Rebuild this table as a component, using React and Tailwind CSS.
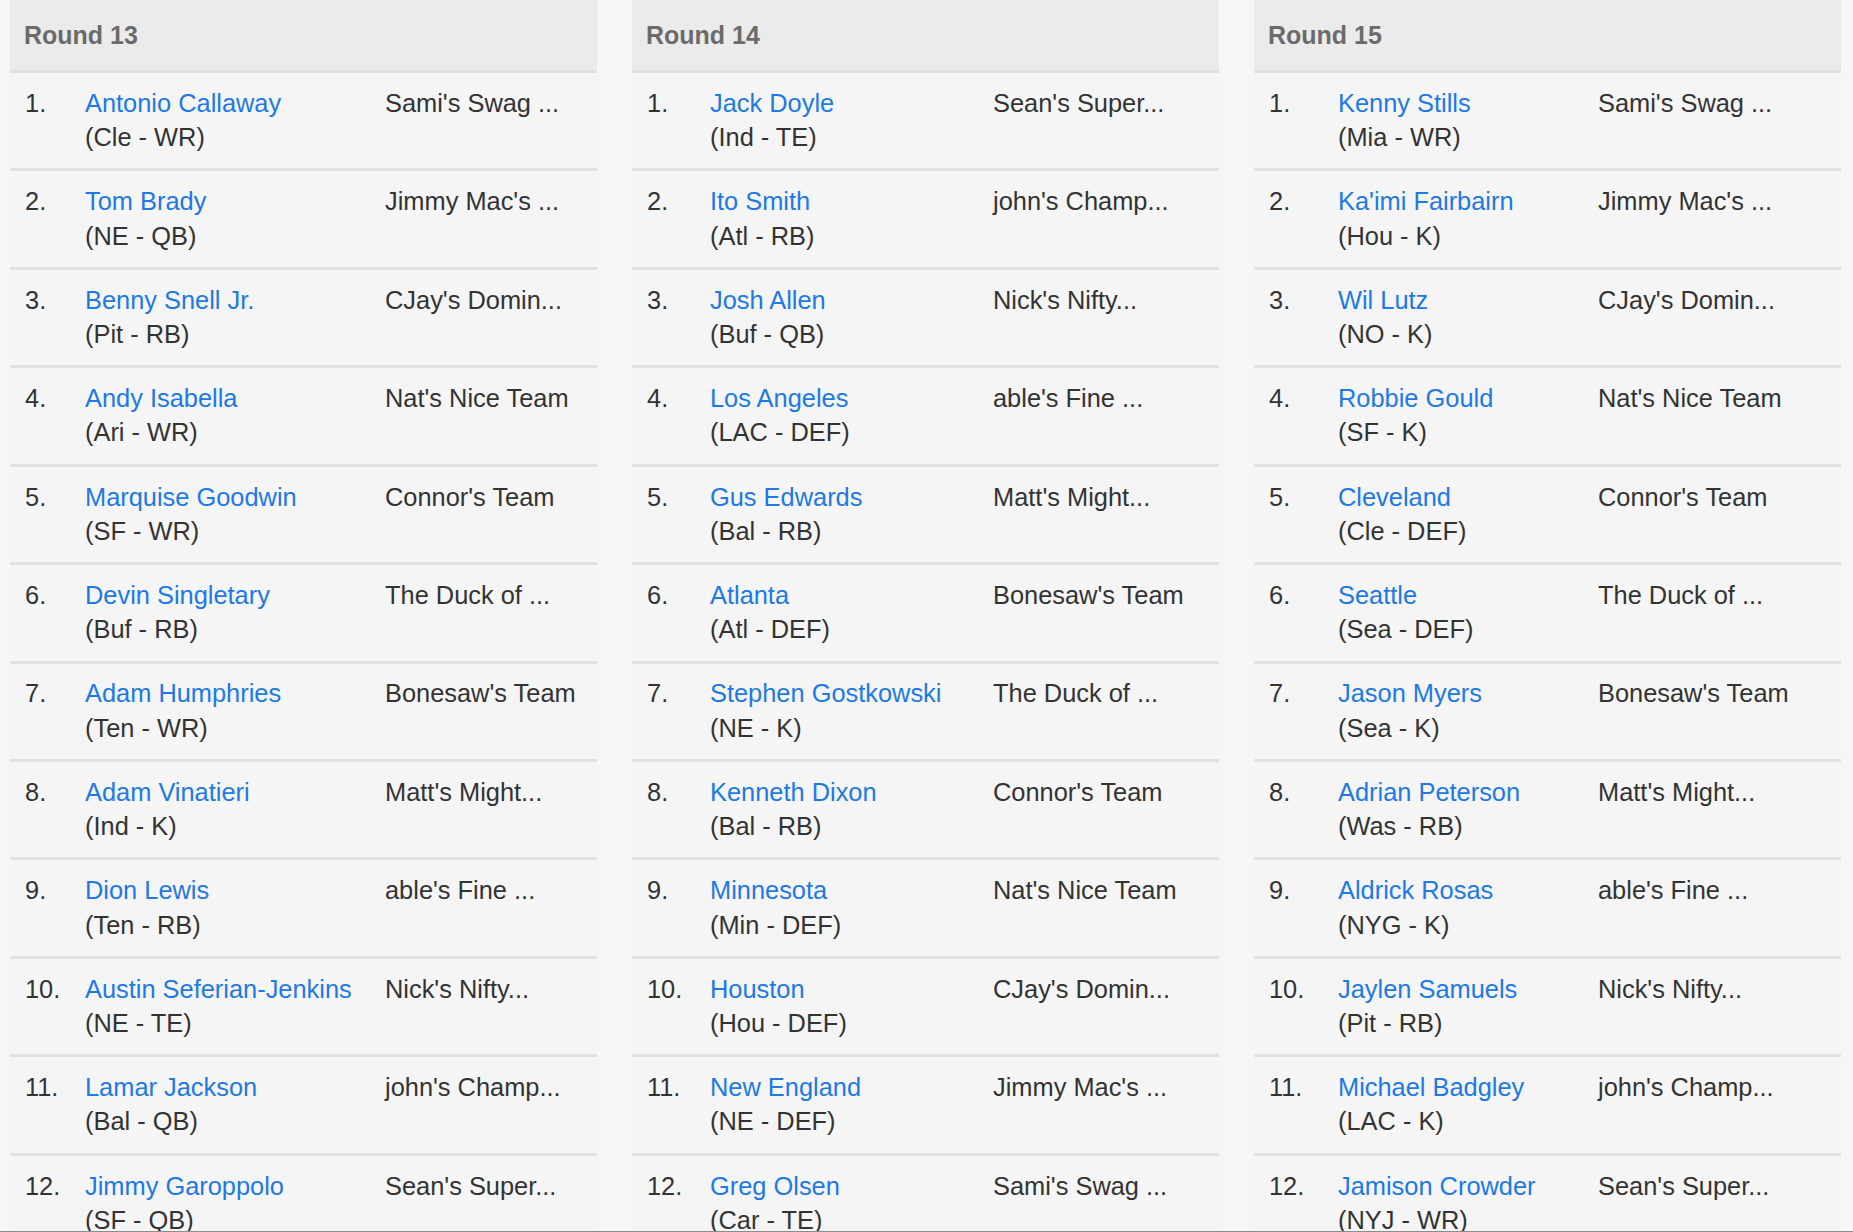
import React from "react";

const rounds = [
  {
    title: "Round 13",
    cols: "grid-cols-[75px_300px_1fr]",
    picks: [
      ["Antonio Callaway", "(Cle - WR)", "Sami's Swag ..."],
      ["Tom Brady", "(NE - QB)", "Jimmy Mac's ..."],
      ["Benny Snell Jr.", "(Pit - RB)", "CJay's Domin..."],
      ["Andy Isabella", "(Ari - WR)", "Nat's Nice Team"],
      ["Marquise Goodwin", "(SF - WR)", "Connor's Team"],
      ["Devin Singletary", "(Buf - RB)", "The Duck of ..."],
      ["Adam Humphries", "(Ten - WR)", "Bonesaw's Team"],
      ["Adam Vinatieri", "(Ind - K)", "Matt's Might..."],
      ["Dion Lewis", "(Ten - RB)", "able's Fine ..."],
      ["Austin Seferian-Jenkins", "(NE - TE)", "Nick's Nifty..."],
      ["Lamar Jackson", "(Bal - QB)", "john's Champ..."],
      ["Jimmy Garoppolo", "(SF - QB)", "Sean's Super..."],
    ],
  },
  {
    title: "Round 14",
    cols: "grid-cols-[78px_283px_1fr]",
    picks: [
      ["Jack Doyle", "(Ind - TE)", "Sean's Super..."],
      ["Ito Smith", "(Atl - RB)", "john's Champ..."],
      ["Josh Allen", "(Buf - QB)", "Nick's Nifty..."],
      ["Los Angeles", "(LAC - DEF)", "able's Fine ..."],
      ["Gus Edwards", "(Bal - RB)", "Matt's Might..."],
      ["Atlanta", "(Atl - DEF)", "Bonesaw's Team"],
      ["Stephen Gostkowski", "(NE - K)", "The Duck of ..."],
      ["Kenneth Dixon", "(Bal - RB)", "Connor's Team"],
      ["Minnesota", "(Min - DEF)", "Nat's Nice Team"],
      ["Houston", "(Hou - DEF)", "CJay's Domin..."],
      ["New England", "(NE - DEF)", "Jimmy Mac's ..."],
      ["Greg Olsen", "(Car - TE)", "Sami's Swag ..."],
    ],
  },
  {
    title: "Round 15",
    cols: "grid-cols-[84px_260px_1fr]",
    picks: [
      ["Kenny Stills", "(Mia - WR)", "Sami's Swag ..."],
      ["Ka'imi Fairbairn", "(Hou - K)", "Jimmy Mac's ..."],
      ["Wil Lutz", "(NO - K)", "CJay's Domin..."],
      ["Robbie Gould", "(SF - K)", "Nat's Nice Team"],
      ["Cleveland", "(Cle - DEF)", "Connor's Team"],
      ["Seattle", "(Sea - DEF)", "The Duck of ..."],
      ["Jason Myers", "(Sea - K)", "Bonesaw's Team"],
      ["Adrian Peterson", "(Was - RB)", "Matt's Might..."],
      ["Aldrick Rosas", "(NYG - K)", "able's Fine ..."],
      ["Jaylen Samuels", "(Pit - RB)", "Nick's Nifty..."],
      ["Michael Badgley", "(LAC - K)", "john's Champ..."],
      ["Jamison Crowder", "(NYJ - WR)", "Sean's Super..."],
    ],
  },
];

function RoundTable({ round }) {
  return (
    <div className="flex flex-col">
      <div className="h-[69px] bg-[#ebebeb] border-b-[3px] border-[#e1e1e1] box-content flex items-center pl-[14px] pt-[1px]">
        <span className="text-[25px] font-bold text-[#6b6b6b] leading-none">{round.title}</span>
      </div>
      {round.picks.map((p, i) => (
        <div
          key={i}
          className={`grid ${round.cols} border-b-[3px] border-[#e1e1e1] pt-[12.9px] pb-[13.95px] bg-[#f5f5f5]`}
        >
          <div className="pl-[15px] text-[#333333] leading-[34.3px]">{i + 1}.</div>
          <div className="flex flex-col leading-[34.3px] whitespace-nowrap">
            <span className="text-[#2079e4]">{p[0]}</span>
            <span className="text-[#333333]">{p[1]}</span>
          </div>
          <div className="text-[#333333] leading-[34.3px] whitespace-nowrap">{p[2]}</div>
        </div>
      ))}
    </div>
  );
}

export default function App() {
  return (
    <div
      className="h-[1232px] w-[1853px] bg-[#f6f6f6] overflow-hidden flex flex-col text-[25.4px]"
      style={{ fontFamily: '"Liberation Sans", Arial, sans-serif' }}
    >
      <div className="flex-1 overflow-hidden grid grid-cols-3 gap-[35px] pl-[10px] pr-[12px]">
        {rounds.map((r) => (
          <RoundTable key={r.title} round={r} />
        ))}
      </div>
      <div className="h-px bg-[#8c8c8c]" />
    </div>
  );
}
